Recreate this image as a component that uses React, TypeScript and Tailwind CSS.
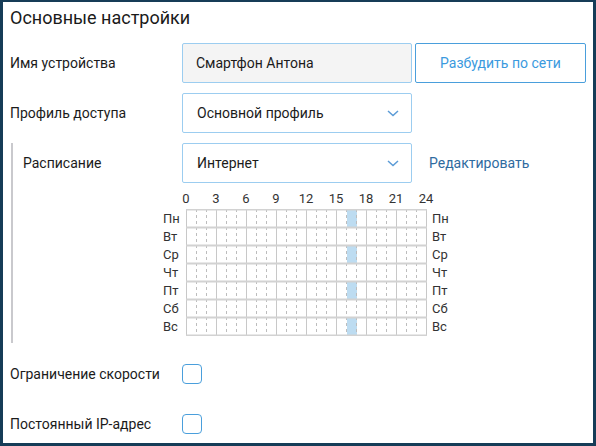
const FONT = "font-['Roboto',_'Noto_Sans',_sans-serif]"

// ─── Data ─────────────────────────────────────────────────────────────────────

const DAYS = ['Пн', 'Вт', 'Ср', 'Чт', 'Пт', 'Сб', 'Вс']
const HOURS = [0, 3, 6, 9, 12, 15, 18, 21, 24]
// hour slots that are allowed per day (index in DAYS)
const ACTIVE: Record<number, number[]> = { 0: [16], 2: [16], 4: [16], 6: [16] }

// ─── Sub-components ───────────────────────────────────────────────────────────

function Chevron() {
  return (
    <svg width="12" height="7" viewBox="0 0 12 7" fill="none">
      <path d="M1 1l5 4.5L11 1" stroke="#5b9bd6" strokeWidth="1.5" />
    </svg>
  )
}

function Select({ value }: { value: string }) {
  return (
    <div className="flex h-10 w-[230px] items-center justify-between rounded-[2px] border border-[#9ccdf0] bg-white pl-[14px] pr-[12px] text-[14px] text-[#1b1b1b]">
      <span>{value}</span>
      <Chevron />
    </div>
  )
}

function Checkbox() {
  return <div className="h-5 w-5 rounded-[4px] border-[1.5px] border-[#4a9fdc] bg-white" />
}

function ScheduleGrid() {
  const w = 241
  const h = 127
  return (
    <svg width={w} height={h} viewBox={`0 0 ${w} ${h}`} className="block">
      <rect x="0" y="0" width={w} height={h} fill="#fff" />
      {DAYS.map((_, d) =>
        (ACTIVE[d] ?? []).map((hr) => (
          <rect key={`${d}-${hr}`} x={hr * 10 + 1} y={d * 18 + 1} width="10" height="17" fill="#bddcf1" />
        )),
      )}
      {Array.from({ length: 25 }, (_, i) =>
        i % 3 === 0 ? (
          <line key={i} x1={i * 10 + 0.5} y1="0" x2={i * 10 + 0.5} y2={h} stroke="#c8c8c8" strokeWidth="1" />
        ) : (
          <line
            key={i}
            x1={i * 10 + 0.5}
            y1="0"
            x2={i * 10 + 0.5}
            y2={h}
            stroke="#bdbdbd"
            strokeWidth="1"
            strokeDasharray="3 3"
          />
        ),
      )}
      {Array.from({ length: 8 }, (_, i) => (
        <line key={i} x1="0" y1={i * 18 + 0.5} x2={w} y2={i * 18 + 0.5} stroke="#d2d2d2" strokeWidth="2" />
      ))}
    </svg>
  )
}

// ─── App ──────────────────────────────────────────────────────────────────────

export default function App() {
  return (
    <div
      className={`${FONT} box-border h-[446px] w-[596px] overflow-hidden border-x-[3px] border-b-[3px] border-t-2 border-[#163c57] bg-white pl-[7px] text-[#1b1b1b]`}
    >
      <div className="mt-1 text-[18px] leading-6 text-[#1a1a1a]">Основные настройки</div>

      {/* Имя устройства */}
      <div className="mt-[13px] flex h-10 items-center">
        <div className="w-[172px] text-[14px]">Имя устройства</div>
        <div className="flex h-10 w-[230px] items-center rounded-[2px] border border-[#9ccdf0] bg-[#f4f4f4] pl-[13px] text-[14px]">
          Смартфон Антона
        </div>
        <button className="ml-[3px] h-10 w-[171px] rounded-[2px] border border-[#4a9fdc] bg-white text-[14px] text-[#3b9ade]">
          Разбудить по сети
        </button>
      </div>

      {/* Профиль доступа */}
      <div className="mt-[10px] flex h-10 items-center">
        <div className="w-[172px] text-[14px]">Профиль доступа</div>
        <Select value="Основной профиль" />
      </div>

      {/* Расписание */}
      <div className="ml-px mt-[10px] border-l-2 border-[#c9c9cd] pb-[7px]">
        <div className="flex h-10 items-center">
          <div className="w-[169px] pl-[10px] text-[14px]">Расписание</div>
          <Select value="Интернет" />
          <span className="ml-[17px] text-[14px] text-[#2f6b9f]">Редактировать</span>
        </div>

        <div className="mt-2 flex pl-[158px] text-[13px] leading-4 text-[#333]">
          {HOURS.map((hr) => (
            <div key={hr} className="w-[30px] text-center">
              {hr}
            </div>
          ))}
        </div>

        <div className="mt-[2px] flex pl-[150px] text-[13px] text-[#333]">
          <div className="flex w-[23px] flex-col">
            {DAYS.map((d) => (
              <div key={d} className="h-[18px] leading-[19px]">
                {d}
              </div>
            ))}
          </div>
          <ScheduleGrid />
          <div className="flex flex-col pl-[5px]">
            {DAYS.map((d) => (
              <div key={d} className="h-[18px] leading-[19px]">
                {d}
              </div>
            ))}
          </div>
        </div>
      </div>

      {/* Ограничение скорости */}
      <div className="mt-[11px] flex h-10 items-center">
        <div className="w-[172px] text-[14px]">Ограничение скорости</div>
        <Checkbox />
      </div>

      {/* Постоянный IP-адрес */}
      <div className="mt-[10px] flex h-10 items-center">
        <div className="w-[172px] text-[14px]">Постоянный IP-адрес</div>
        <Checkbox />
      </div>
    </div>
  )
}
